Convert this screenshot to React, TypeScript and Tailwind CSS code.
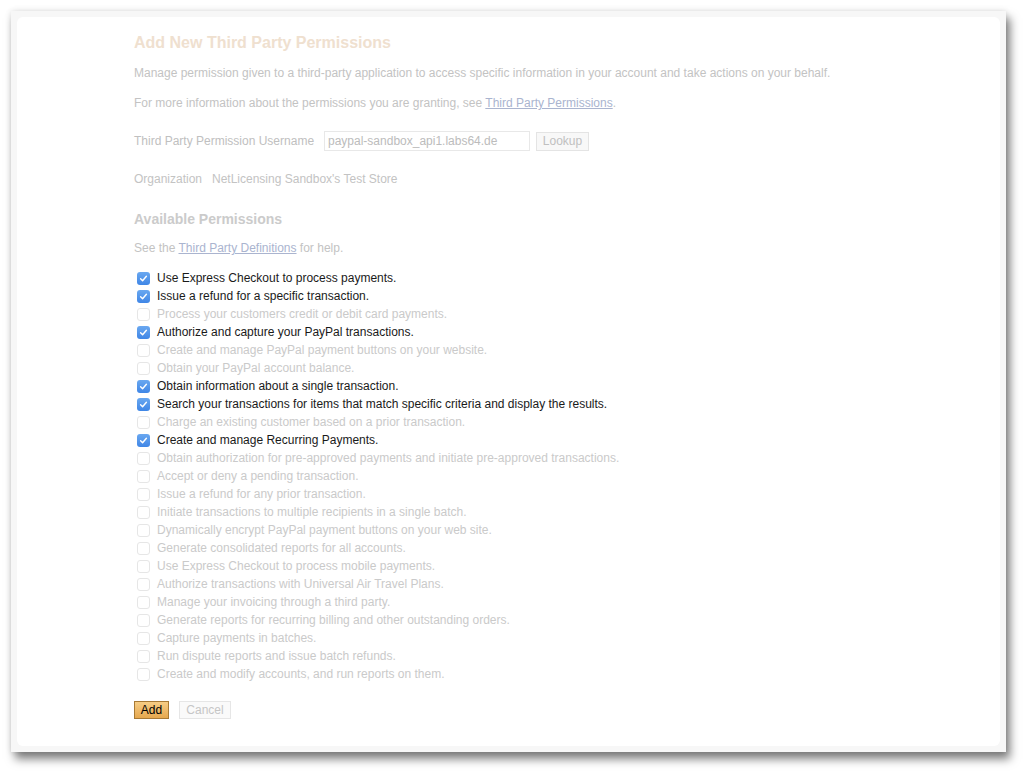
import React from "react";

const perms: [string, boolean][] = [
  ["Use Express Checkout to process payments.", true],
  ["Issue a refund for a specific transaction.", true],
  ["Process your customers credit or debit card payments.", false],
  ["Authorize and capture your PayPal transactions.", true],
  ["Create and manage PayPal payment buttons on your website.", false],
  ["Obtain your PayPal account balance.", false],
  ["Obtain information about a single transaction.", true],
  ["Search your transactions for items that match specific criteria and display the results.", true],
  ["Charge an existing customer based on a prior transaction.", false],
  ["Create and manage Recurring Payments.", true],
  ["Obtain authorization for pre-approved payments and initiate pre-approved transactions.", false],
  ["Accept or deny a pending transaction.", false],
  ["Issue a refund for any prior transaction.", false],
  ["Initiate transactions to multiple recipients in a single batch.", false],
  ["Dynamically encrypt PayPal payment buttons on your web site.", false],
  ["Generate consolidated reports for all accounts.", false],
  ["Use Express Checkout to process mobile payments.", false],
  ["Authorize transactions with Universal Air Travel Plans.", false],
  ["Manage your invoicing through a third party.", false],
  ["Generate reports for recurring billing and other outstanding orders.", false],
  ["Capture payments in batches.", false],
  ["Run dispute reports and issue batch refunds.", false],
  ["Create and modify accounts, and run reports on them.", false],
];

function Box({ checked }: { checked: boolean }) {
  if (checked) {
    return (
      <span className="ml-[3px] flex h-[13px] w-[13px] items-center justify-center rounded-[3px] bg-gradient-to-b from-[#6aa8f0] to-[#3f86e6]">
        <svg width="9" height="9" viewBox="0 0 9 9">
          <path d="M1.6 4.8 L3.6 6.8 L7.4 2.2" fill="none" stroke="#fff" strokeWidth="1.4" strokeLinecap="round" strokeLinejoin="round" />
        </svg>
      </span>
    );
  }
  return <span className="ml-[3px] block h-[13px] w-[13px] rounded-[3px] border border-[#e6e6e6] bg-white" />;
}

export default function App() {
  return (
    <div
      className="min-h-[771px] w-[1025px] bg-white pl-[11px] pt-[11px]"
      style={{ fontFamily: '"Liberation Sans", Arial, Helvetica, sans-serif' }}
    >
      <div className="h-[741px] w-[995px] bg-[#f7f7f7] p-[6px] shadow-[4px_7px_9px_rgba(0,0,0,0.5),0_0_6px_rgba(0,0,0,0.12)]">
        <div className="h-full w-full rounded-[6px] bg-white pl-[117px] pt-[16px]">
          <h1 className="text-[16px] font-bold leading-[20px] text-[#efe0cf]">Add New Third Party Permissions</h1>
          <p className="mt-[11px] text-[12px] leading-[18px] text-[#c3c3c3]">
            Manage permission given to a third-party application to access specific information in your account and take actions on your behalf.
          </p>
          <p className="mt-[12px] text-[12px] leading-[18px] text-[#c3c3c3]">
            For more information about the permissions you are granting, see{" "}
            <span className="text-[#aab4cf] underline">Third Party Permissions</span>.
          </p>
          <div className="mt-[19px] flex h-[20px] items-center text-[12px] text-[#c0c0c0]">
            <span className="w-[190px]">Third Party Permission Username</span>
            <div className="flex h-[20px] w-[206px] items-center border border-[#e8e8e8] pl-[3px] text-[#bcbcbc]">
              paypal-sandbox_api1.labs64.de
            </div>
            <div className="ml-[6px] flex h-[19px] w-[53px] items-center justify-center border border-[#e4e4e4] bg-[#f8f8f8] text-[#c0c0c0]">
              Lookup
            </div>
          </div>
          <div className="mt-[19px] flex text-[12px] leading-[18px] text-[#c3c3c3]">
            <span className="w-[78px]">Organization</span>
            <span>NetLicensing Sandbox's Test Store</span>
          </div>
          <h2 className="mt-[22px] text-[14px] font-bold leading-[18px] text-[#cbcbcb]">Available Permissions</h2>
          <p className="mt-[11px] text-[12px] leading-[18px] text-[#c3c3c3]">
            See the <span className="text-[#aab4cf] underline">Third Party Definitions</span> for help.
          </p>
          <ul className="mt-[12px]">
            {perms.map(([t, c]) => (
              <li key={t} className="flex h-[18px] items-center text-[12px]">
                <Box checked={c} />
                <span className={"ml-[7px] " + (c ? "text-[#1a1a1a]" : "text-[#cacaca]")}>{t}</span>
              </li>
            ))}
          </ul>
          <div className="mt-[18px] flex gap-[10px] text-[12px]">
            <div className="flex h-[18px] w-[35px] items-center justify-center border border-[#a87a35] bg-gradient-to-b from-[#f6cd85] to-[#e6a84e] text-black">
              Add
            </div>
            <div className="flex h-[18px] w-[52px] items-center justify-center border border-[#e6e6e6] bg-[#fafafa] text-[#c6c6c6]">
              Cancel
            </div>
          </div>
        </div>
      </div>
    </div>
  );
}
